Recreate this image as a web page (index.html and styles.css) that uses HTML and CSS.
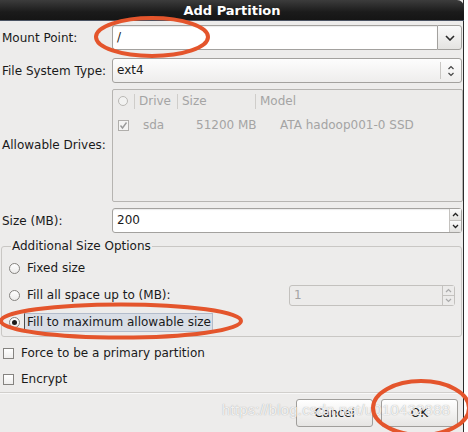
FILE: index.html
```html
<!DOCTYPE html>
<html>
<head>
<meta charset="utf-8">
<link rel="stylesheet" href="styles.css">
</head>
<body>
<div class="dialog">
  <div class="titlebar">Add Partition</div>
  <div class="content">
    <div class="row row-mount">
      <div class="label">Mount Point:</div>
      <div class="combo">
        <div class="entry">/</div>
        <div class="combo-btn">
          <svg width="10" height="6" viewBox="0 0 10 6"><polyline points="1,1 5,5 9,1" fill="none" stroke="#2a2a2a" stroke-width="1.6"/></svg>
        </div>
      </div>
    </div>
    <div class="row row-fs">
      <div class="label">File System Type:</div>
      <div class="select">
        <div class="select-text">ext4</div>
        <div class="select-arrows">
          <svg width="8" height="14" viewBox="0 0 8 14"><polyline points="1.5,5 4,2.5 6.5,5" fill="none" stroke="#444" stroke-width="1.2"/><polyline points="1.5,9 4,11.5 6.5,9" fill="none" stroke="#444" stroke-width="1.2"/></svg>
        </div>
      </div>
    </div>
    <div class="row row-drives">
      <div class="label">Allowable Drives:</div>
      <div class="table">
        <div class="thead">
          <div class="col c0"><span class="hcircle"></span></div>
          <div class="col c1">Drive</div>
          <div class="col c2">Size</div>
          <div class="col c3">Model</div>
        </div>
        <div class="trow">
          <div class="cell c0"><span class="tcheck"><svg width="9" height="9" viewBox="0 0 9 9"><polyline points="1.5,4.5 3.5,7 7.5,1.5" fill="none" stroke="#9a9a9a" stroke-width="1.4"/></svg></span></div>
          <div class="cell c1">sda</div>
          <div class="cell c2">51200 MB</div>
          <div class="cell c3">ATA hadoop001-0 SSD</div>
        </div>
      </div>
    </div>
    <div class="row row-size">
      <div class="label">Size (MB):</div>
      <div class="spin">
        <div class="spin-text">200</div>
        <div class="spin-btns">
          <div class="sbtn"><svg width="7" height="5" viewBox="0 0 7 5"><polyline points="1,4 3.5,1.5 6,4" fill="none" stroke="#222" stroke-width="1.3"/></svg></div>
          <div class="sbtn"><svg width="7" height="5" viewBox="0 0 7 5"><polyline points="1,1 3.5,3.5 6,1" fill="none" stroke="#222" stroke-width="1.3"/></svg></div>
        </div>
      </div>
    </div>
    <fieldset class="frame">
      <legend>Additional Size Options</legend>
      <div class="opt">
        <span class="radio"></span><span class="opt-text">Fixed size</span>
      </div>
      <div class="opt opt-fill">
        <span class="radio"></span><span class="opt-text">Fill all space up to (MB):</span>
        <div class="spin spin-dis">
          <div class="spin-text">1</div>
          <div class="spin-btns">
            <div class="sbtn"><svg width="7" height="5" viewBox="0 0 7 5"><polyline points="1,4 3.5,1.5 6,4" fill="none" stroke="#aaa" stroke-width="1.2"/></svg></div>
            <div class="sbtn"><svg width="7" height="5" viewBox="0 0 7 5"><polyline points="1,1 3.5,3.5 6,1" fill="none" stroke="#aaa" stroke-width="1.2"/></svg></div>
          </div>
        </div>
      </div>
      <div class="opt">
        <span class="radio on"></span><span class="opt-text focus">Fill to maximum allowable size</span>
      </div>
    </fieldset>
    <div class="check-row check-first"><span class="checkbox"></span><span>Force to be a primary partition</span></div>
    <div class="check-row"><span class="checkbox"></span><span>Encrypt</span></div>
    <div class="separator"></div>
    <div class="buttons">
      <div class="btn">Cancel</div>
      <div class="btn">OK</div>
    </div>
  </div>
  <div class="watermark">https://blog.csdn.net/u010432888</div>
  <svg class="marks" width="468" height="432" viewBox="0 0 468 432">
    <ellipse cx="152" cy="37" rx="56" ry="19" fill="none" stroke="#e4552c" stroke-width="4"/>
    <ellipse cx="121" cy="321" rx="120" ry="16.5" fill="none" stroke="#e4552c" stroke-width="4"/>
    <ellipse cx="421" cy="408" rx="48" ry="27" fill="none" stroke="#e4552c" stroke-width="4"/>
  </svg>
</div>
</body>
</html>
```

FILE: styles.css
```css
* { box-sizing: border-box; }
html, body { margin: 0; padding: 0; background: #ffffff; }
body {
  font-family: "DejaVu Sans", "Noto Sans", sans-serif;
  font-size: 12px;
  color: #1a1a1a;
  width: 468px;
  height: 432px;
  overflow: hidden;
}
.dialog {
  position: relative;
  width: 464px;
  height: 432px;
  background: #edeceb;
  border-right: 1px solid #2c2c2c;
}
.titlebar {
  height: 21px;
  line-height: 21px;
  background: linear-gradient(#3c3c3c, #1b1b1b 60%, #151515);
  border-bottom: 1px solid #4a5262;
  color: #ffffff;
  font-weight: bold;
  font-size: 13px;
  text-align: center;
  border-top-right-radius: 7px;
  margin-right: -1px;
}
.content { padding: 4px 0 0 2px; }
.row { display: flex; align-items: center; }
.label { width: 110px; flex: none; }
.row-mount { height: 25px; }
.row-fs { height: 25px; margin-top: 8px; }
.row-drives { height: 115px; margin-top: 4px; }
.row-size { height: 25px; margin-top: 6px; }

.combo { display: flex; width: 350px; height: 25px; }
.entry {
  flex: 1;
  background: #fff;
  border: 1px solid #a3a19e;
  border-right: none;
  border-radius: 3px 0 0 3px;
  padding-left: 4px;
  line-height: 23px;
  box-shadow: inset 0 1px 1px rgba(0,0,0,0.08);
}
.combo-btn {
  width: 25px;
  border: 1px solid #a3a19e;
  border-radius: 0 3px 3px 0;
  background: linear-gradient(#fafafa, #e4e3e1);
  display: flex; align-items: center; justify-content: center;
}
.select {
  display: flex;
  width: 350px; height: 25px;
  border: 1px solid #a3a19e;
  border-radius: 3px;
  background: linear-gradient(#fdfdfd, #eeedec);
}
.select-text { flex: 1; padding-left: 4px; line-height: 23px; }
.select-arrows {
  width: 21px;
  border-left: 1px solid #c9c7c4;
  margin: 3px 0;
  display: flex; align-items: center; justify-content: center;
}

.table {
  width: 351px;
  border: 1px solid #b6b4b1;
  border-radius: 2px;
  background: #ecebea;
  color: #a4a4a4;
  align-self: flex-start;
  margin-top: 2px;
  height: 113px;
}
.thead, .trow { display: flex; align-items: center; }
.thead { height: 22px; }
.trow { height: 22px; margin-top: 2px; }
.col { height: 15px; line-height: 15px; border-left: 1px solid #cfcdca; padding-left: 4px; }
.col.c0 { border-left: none; padding-left: 5px; width: 21px; display: flex; align-items: center; }
.col.c1 { width: 43px; }
.col.c2 { width: 78px; }
.col.c3 { flex: 1; }
.hcircle { width: 10px; height: 10px; border: 1px solid #b9b7b4; border-radius: 50%; background: #f2f2f1; }
.cell { padding-left: 4px; }
.cell.c0 { width: 26px; padding-left: 5px; display: flex; }
.cell.c1 { width: 53px; }
.cell.c2 { width: 84px; }
.cell.c3 { flex: 1; }
.tcheck {
  width: 11px; height: 11px;
  border: 1px solid #b0aeab;
  background: #f4f4f3;
  display: flex; align-items: center; justify-content: center;
}

.spin {
  display: flex;
  width: 350px; height: 25px;
  background: #fff;
  border: 1px solid #a3a19e;
  border-radius: 3px;
  box-shadow: inset 0 1px 1px rgba(0,0,0,0.08);
}
.spin-text { flex: 1; padding-left: 4px; line-height: 23px; }
.spin-btns { width: 12px; display: flex; flex-direction: column; border-left: 1px solid #c4c2bf; }
.sbtn {
  flex: 1;
  background: linear-gradient(#fbfbfb, #e2e1df);
  display: flex; align-items: center; justify-content: center;
}
.sbtn + .sbtn { border-top: 1px solid #c4c2bf; }

.frame {
  margin: 6px 1px 0 0;
  padding: 2px 0 0 7px;
  border: 1px solid #c9c7c4;
  border-radius: 3px;
  min-width: 0;
  width: 461px;
  margin-left: -1px;
  height: 98px;
}
.frame legend {
  padding: 0 1px;
  margin-left: 2px;
  line-height: 14px;
}
.opt { display: flex; align-items: center; height: 27px; }
.radio {
  width: 11px; height: 11px;
  border: 1px solid #858380;
  border-radius: 50%;
  background: linear-gradient(#ffffff, #ecebea);
  margin-right: 6px;
  flex: none;
  display: flex; align-items: center; justify-content: center;
}
.radio.on::after {
  content: "";
  width: 5px; height: 5px;
  border-radius: 50%;
  background: #1a1a1a;
}
.opt-text { line-height: 17px; padding: 0 1px; }
.opt-text.focus {
  background: #d9dee6;
  border: 1px solid #b3bccb;
  border-left-color: #4c4c4c;
  margin-left: -2px;
  padding: 0 1px 0 2px;
}
.opt-fill .spin-dis {
  margin-left: auto;
  margin-right: 6px;
  width: 166px; height: 21px;
  background: #ecebea;
  border-color: #c3c1be;
  color: #a4a4a4;
  box-shadow: none;
}
.spin-dis .spin-text { line-height: 19px; }
.spin-dis .sbtn { background: #ecebea; }

.check-row { display: flex; align-items: center; height: 26px; padding-left: 1px; }
.check-first { margin-top: 3px; }
.checkbox {
  width: 11px; height: 11px;
  border: 1px solid #858380;
  background: linear-gradient(#ffffff, #efeeed);
  margin-right: 7px;
}
.separator {
  margin: 0 0 0 -2px;
  height: 2px;
  border-top: 1px solid #d1cfcc;
  border-bottom: 1px solid #f8f8f8;
}
.buttons {
  display: flex;
  justify-content: flex-end;
  gap: 8px;
  padding-right: 5px;
  margin-top: 5px;
}
.btn {
  width: 77px; height: 28px;
  line-height: 26px;
  text-align: center;
  border: 1px solid #a09e9b;
  border-radius: 3px;
  background: linear-gradient(#ffffff, #e6e5e3);
}
.watermark {
  position: absolute;
  left: 222px; top: 401px;
  font-family: "Liberation Sans", Arial, sans-serif;
  font-size: 15px;
  color: rgba(255,255,255,0.85);
  text-shadow: 0 0 1px rgba(120,120,120,0.7);
  letter-spacing: 0.2px;
  white-space: nowrap;
  pointer-events: none;
}
.marks { position: absolute; left: 0; top: 0; pointer-events: none; }
```
